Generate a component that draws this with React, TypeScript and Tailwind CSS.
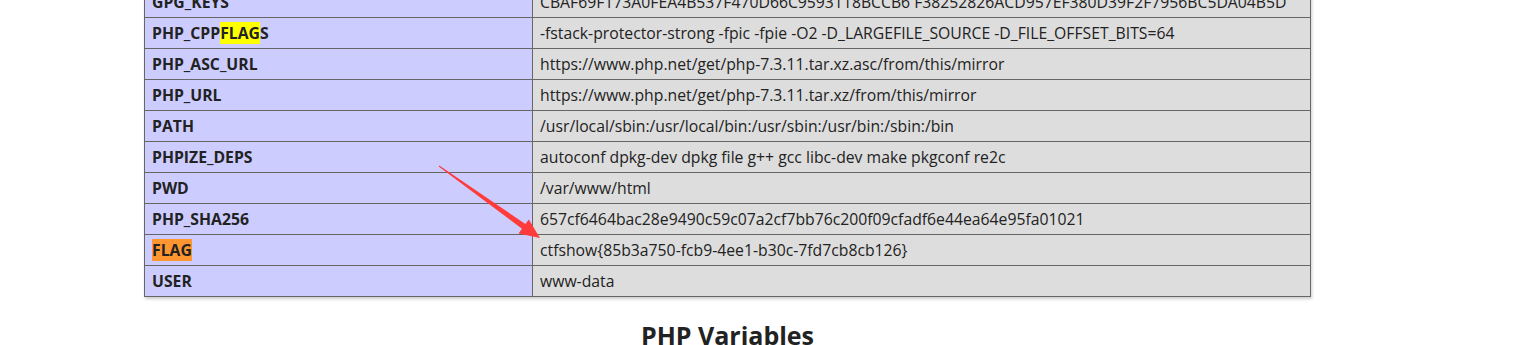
import React from 'react'

interface Row {
    name: React.ReactNode
    value: string
}

const rows: Row[] = [
    { name: 'GPG_KEYS', value: 'CBAF69F173A0FEA4B537F470D66C9593118BCCB6 F38252826ACD957EF380D39F2F7956BC5DA04B5D' },
    { name: <>PHP_CPP<span className='bg-[#ffff00]'>FLAG</span>S</>, value: '-fstack-protector-strong -fpic -fpie -O2 -D_LARGEFILE_SOURCE -D_FILE_OFFSET_BITS=64' },
    { name: 'PHP_ASC_URL', value: 'https://www.php.net/get/php-7.3.11.tar.xz.asc/from/this/mirror' },
    { name: 'PHP_URL', value: 'https://www.php.net/get/php-7.3.11.tar.xz/from/this/mirror' },
    { name: 'PATH', value: '/usr/local/sbin:/usr/local/bin:/usr/sbin:/usr/bin:/sbin:/bin' },
    { name: 'PHPIZE_DEPS', value: 'autoconf dpkg-dev dpkg file g++ gcc libc-dev make pkgconf re2c' },
    { name: 'PWD', value: '/var/www/html' },
    { name: 'PHP_SHA256', value: '657cf6464bac28e9490c59c07a2cf7bb76c200f09cfadf6e44ea64e95fa01021' },
    { name: <span className='bg-[#ff9632]'>FLAG</span>, value: 'ctfshow{85b3a750-fcb9-4ee1-b30c-7fd7cb8cb126}' },
    { name: 'USER', value: 'www-data' },
]

const App = () => {
    return (
        <div className="relative h-[345px] w-[1519px] overflow-hidden bg-white text-[#222] font-['Open_Sans',sans-serif]">
            <div className="ml-[144px] -mt-[14px] w-[1167px]">
                <table className="w-full border-collapse shadow-[1px_2px_3px_#ccc] text-[15.75px]">
                    <tbody>
                        {rows.map((row, i) => (
                            <tr key={i} className="h-[31px]">
                                <td className="w-[388px] border border-[#666] bg-[#ccf] px-[7px] py-0 font-bold align-middle leading-[20px]">{row.name}</td>
                                <td className="border border-[#666] bg-[#ddd] px-[7px] py-0 align-middle leading-[20px]">{row.value}</td>
                            </tr>
                        ))}
                    </tbody>
                </table>
                <h2 className="mt-[20px] text-center text-[25px] font-bold leading-[36px]">PHP Variables</h2>
            </div>
            {/* red annotation arrow */}
            <svg className="absolute left-0 top-0 pointer-events-none" width="1519" height="345">
                <polygon points="439.3,165.4 525.4,224 528.8,219.5 540,238 518.5,233.5 522,228.8 438.7,166.6" fill="#ff3b3b" />
            </svg>
        </div>
    )
}

export default App
